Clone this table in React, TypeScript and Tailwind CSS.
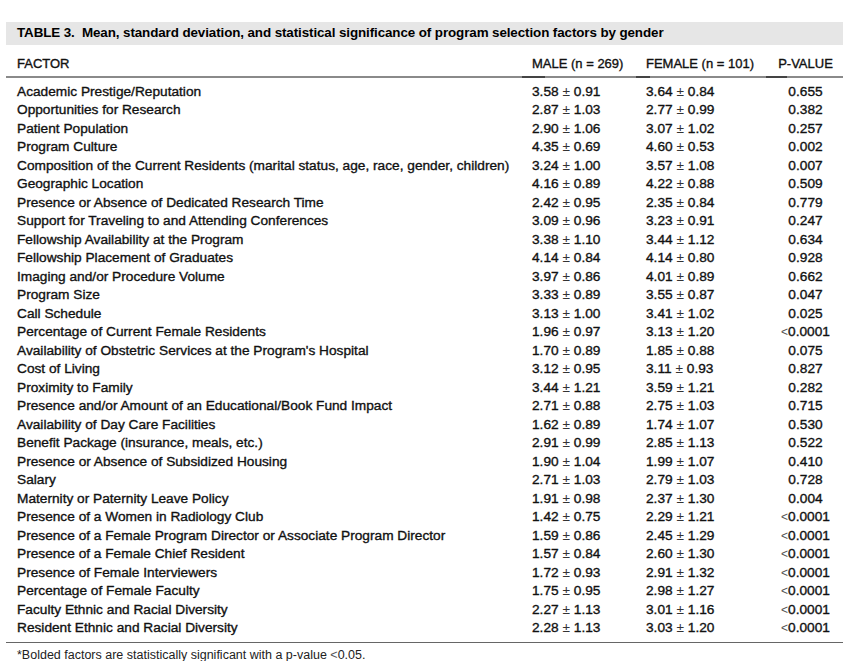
const rows: [string, string, string, string][] = [
  ["Academic Prestige/Reputation", "3.58|0.91", "3.64|0.84", "0.655"],
  ["Opportunities for Research", "2.87|1.03", "2.77|0.99", "0.382"],
  ["Patient Population", "2.90|1.06", "3.07|1.02", "0.257"],
  ["Program Culture", "4.35|0.69", "4.60|0.53", "0.002"],
  ["Composition of the Current Residents (marital status, age, race, gender, children)", "3.24|1.00", "3.57|1.08", "0.007"],
  ["Geographic Location", "4.16|0.89", "4.22|0.88", "0.509"],
  ["Presence or Absence of Dedicated Research Time", "2.42|0.95", "2.35|0.84", "0.779"],
  ["Support for Traveling to and Attending Conferences", "3.09|0.96", "3.23|0.91", "0.247"],
  ["Fellowship Availability at the Program", "3.38|1.10", "3.44|1.12", "0.634"],
  ["Fellowship Placement of Graduates", "4.14|0.84", "4.14|0.80", "0.928"],
  ["Imaging and/or Procedure Volume", "3.97|0.86", "4.01|0.89", "0.662"],
  ["Program Size", "3.33|0.89", "3.55|0.87", "0.047"],
  ["Call Schedule", "3.13|1.00", "3.41|1.02", "0.025"],
  ["Percentage of Current Female Residents", "1.96|0.97", "3.13|1.20", "<0.0001"],
  ["Availability of Obstetric Services at the Program's Hospital", "1.70|0.89", "1.85|0.88", "0.075"],
  ["Cost of Living", "3.12|0.95", "3.11|0.93", "0.827"],
  ["Proximity to Family", "3.44|1.21", "3.59|1.21", "0.282"],
  ["Presence and/or Amount of an Educational/Book Fund Impact", "2.71|0.88", "2.75|1.03", "0.715"],
  ["Availability of Day Care Facilities", "1.62|0.89", "1.74|1.07", "0.530"],
  ["Benefit Package (insurance, meals, etc.)", "2.91|0.99", "2.85|1.13", "0.522"],
  ["Presence or Absence of Subsidized Housing", "1.90|1.04", "1.99|1.07", "0.410"],
  ["Salary", "2.71|1.03", "2.79|1.03", "0.728"],
  ["Maternity or Paternity Leave Policy", "1.91|0.98", "2.37|1.30", "0.004"],
  ["Presence of a Women in Radiology Club", "1.42|0.75", "2.29|1.21", "<0.0001"],
  ["Presence of a Female Program Director or Associate Program Director", "1.59|0.86", "2.45|1.29", "<0.0001"],
  ["Presence of a Female Chief Resident", "1.57|0.84", "2.60|1.30", "<0.0001"],
  ["Presence of Female Interviewers", "1.72|0.93", "2.91|1.32", "<0.0001"],
  ["Percentage of Female Faculty", "1.75|0.95", "2.98|1.27", "<0.0001"],
  ["Faculty Ethnic and Racial Diversity", "2.27|1.13", "3.01|1.16", "<0.0001"],
  ["Resident Ethnic and Racial Diversity", "2.28|1.13", "3.03|1.20", "<0.0001"],
];

const grid = "grid grid-cols-[515px_114px_122px_1fr] pl-[11px]";

function MeanSd({ v }: { v: string }) {
  const [mean, sd] = v.split("|");
  return (
    <span>
      {mean} <span className="text-[#333] [-webkit-text-stroke:0]">±</span> {sd}
    </span>
  );
}

function PValue({ v }: { v: string }) {
  if (v.startsWith("<")) {
    return (
      <span>
        <span className="text-[12px] text-[#555] [-webkit-text-stroke:0]">&lt;</span>
        {v.slice(1)}
      </span>
    );
  }
  return <span>{v}</span>;
}

export default function App() {
  return (
    <div className="min-h-[661px] bg-white pt-[22px] font-['Liberation_Sans',Arial,sans-serif] text-[#111]">
      <div className="mx-[6px] w-[837px]">
        <div className="flex h-[23px] items-center bg-[#e6e6e6] pl-[11px] text-[13.4px] font-bold tracking-[-0.1px] text-black">
          TABLE 3.&nbsp;&nbsp;Mean, standard deviation, and statistical significance of program selection factors by gender
        </div>

        <div className={`${grid} pt-[12px] pb-[5px] text-[13px] leading-[14px] [-webkit-text-stroke:0.35px]`}>
          <div>FACTOR</div>
          <div>MALE (n = 269)</div>
          <div>FEMALE (n = 101)</div>
          <div className="text-center">P-VALUE</div>
        </div>
        <div className="relative h-[2px] bg-[#8a8a8a]">
          <span className="absolute left-[516px] top-0 h-[2px] w-[23px] bg-[#444]" />
          <span className="absolute left-[630px] top-0 h-[2px] w-[14px] bg-[#444]" />
          <span className="absolute left-[760px] top-0 h-[2px] w-[21px] bg-[#444]" />
        </div>

        <div className="pt-[5px] pb-[4px] text-[13.7px] leading-[18.48px] [-webkit-text-stroke:0.35px]">
          {rows.map(([factor, male, female, p]) => (
            <div key={factor} className={grid}>
              <div className="whitespace-nowrap">{factor}</div>
              <div className="whitespace-nowrap">
                <MeanSd v={male} />
              </div>
              <div className="whitespace-nowrap">
                <MeanSd v={female} />
              </div>
              <div className="whitespace-nowrap text-center">
                <PValue v={p} />
              </div>
            </div>
          ))}
        </div>
        <div className="h-[1.5px] bg-[#666]" />

        <div className="pl-[11px] pt-[5px] text-[12.5px] leading-[14px] text-[#222]">
          *Bolded factors are statistically significant with a p-value{" "}
          <span className="text-[#555]">&lt;</span>0.05.
        </div>
      </div>
    </div>
  );
}
